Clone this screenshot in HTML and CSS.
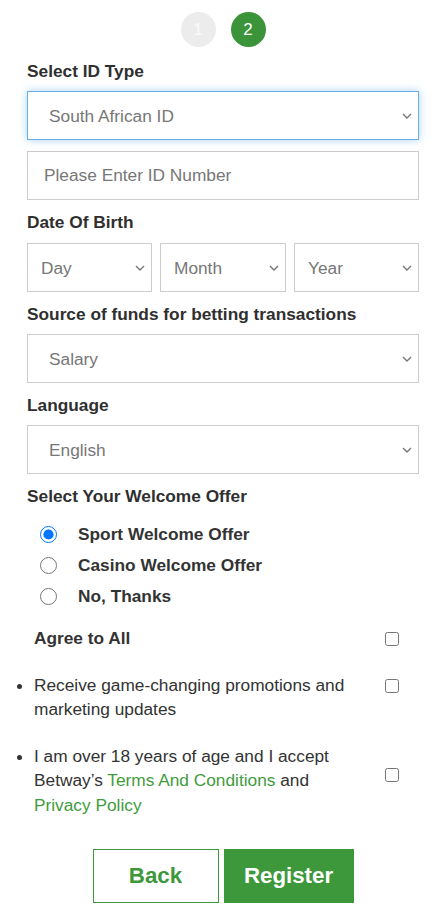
FILE: index.html
```html
<!DOCTYPE html>
<html lang="en">
<head>
<meta charset="utf-8">
<title>Register</title>
<link rel="stylesheet" href="styles.css">
</head>
<body>
<div class="page">
  <div class="steps">
    <span class="step step-done">1</span>
    <span class="step step-active">2</span>
  </div>

  <div class="label label-first">Select ID Type</div>
  <div class="select-wrap focused">
    <select class="field select-wide"><option>South African ID</option></select>
    <svg class="chev" width="10" height="6" viewBox="0 0 10 6"><path d="M1 1l4 4 4-4" fill="none" stroke="#777" stroke-width="1.4"/></svg>
  </div>
  <input class="field input" type="text" placeholder="Please Enter ID Number">

  <div class="label label-dob">Date Of Birth</div>
  <div class="dob">
    <div class="select-wrap">
      <select class="field select-small"><option>Day</option></select>
      <svg class="chev" width="10" height="6" viewBox="0 0 10 6"><path d="M1 1l4 4 4-4" fill="none" stroke="#777" stroke-width="1.4"/></svg>
    </div>
    <div class="select-wrap">
      <select class="field select-small"><option>Month</option></select>
      <svg class="chev" width="10" height="6" viewBox="0 0 10 6"><path d="M1 1l4 4 4-4" fill="none" stroke="#777" stroke-width="1.4"/></svg>
    </div>
    <div class="select-wrap">
      <select class="field select-small"><option>Year</option></select>
      <svg class="chev" width="10" height="6" viewBox="0 0 10 6"><path d="M1 1l4 4 4-4" fill="none" stroke="#777" stroke-width="1.4"/></svg>
    </div>
  </div>

  <div class="label">Source of funds for betting transactions</div>
  <div class="select-wrap">
    <select class="field select-wide"><option>Salary</option></select>
    <svg class="chev" width="10" height="6" viewBox="0 0 10 6"><path d="M1 1l4 4 4-4" fill="none" stroke="#777" stroke-width="1.4"/></svg>
  </div>

  <div class="label">Language</div>
  <div class="select-wrap">
    <select class="field select-wide"><option>English</option></select>
    <svg class="chev" width="10" height="6" viewBox="0 0 10 6"><path d="M1 1l4 4 4-4" fill="none" stroke="#777" stroke-width="1.4"/></svg>
  </div>

  <div class="label">Select Your Welcome Offer</div>
  <div class="radios">
    <label class="radio-row"><input type="radio" name="offer" checked><span>Sport Welcome Offer</span></label>
    <label class="radio-row"><input type="radio" name="offer"><span>Casino Welcome Offer</span></label>
    <label class="radio-row"><input type="radio" name="offer"><span>No, Thanks</span></label>
  </div>

  <div class="consents">
    <div class="consent">
      <div class="consent-text strong">Agree to All</div>
      <div class="consent-box"><input type="checkbox"></div>
    </div>
    <div class="consent bullet">
      <div class="consent-text">Receive game-changing promotions and marketing updates</div>
      <div class="consent-box"><input type="checkbox"></div>
    </div>
    <div class="consent bullet">
      <div class="consent-text">I am over 18 years of age and I accept Betway’s <a href="#">Terms And Conditions</a> and <a href="#">Privacy Policy</a></div>
      <div class="consent-box consent-box-low"><input type="checkbox"></div>
    </div>
  </div>

  <div class="buttons">
    <button class="btn btn-back">Back</button>
    <button class="btn btn-register">Register</button>
  </div>
</div>
</body>
</html>
```

FILE: styles.css
```css
html, body {
  margin: 0;
  padding: 0;
  background: #fff;
}

body {
  font-family: "Liberation Sans", Arial, sans-serif;
  font-size: 17.3px;
  color: #333;
}

.page {
  width: 392px;
  padding: 12px 28px 0 27px;
}

.steps {
  display: flex;
  justify-content: center;
  gap: 15px;
  height: 35px;
}

.step {
  width: 35px;
  height: 35px;
  border-radius: 50%;
  display: flex;
  align-items: center;
  justify-content: center;
  color: #fff;
  font-size: 17px;
}

.step-done {
  background: #ececec;
  color: #fafafa;
}

.step-active {
  background: #3b9439;
}

.label {
  font-weight: bold;
  line-height: 20px;
  margin: 12px 0 10px;
  color: #2f2f2f;
}

.label-first {
  margin-top: 14px;
}

.label-dob {
  margin-bottom: 11px;
}

.select-wrap {
  position: relative;
}

.field {
  display: block;
  box-sizing: border-box;
  width: 100%;
  height: 49px;
  border: 1px solid #ccc;
  border-radius: 0;
  background: #fff;
  font-family: "Liberation Sans", Arial, sans-serif;
  font-size: 17.3px;
  color: #777;
  outline: none;
  margin: 0;
}

select.field {
  -webkit-appearance: none;
  appearance: none;
}

.select-wide {
  padding: 0 30px 0 21px;
}

.select-small {
  padding: 0 24px 0 13px;
}

.focused .field {
  border-color: #66afe9;
  box-shadow: 0 0 8px rgba(102, 175, 233, 0.55);
}

.chev {
  position: absolute;
  right: 7px;
  top: 22px;
  pointer-events: none;
}

.input {
  margin-top: 11px;
  padding: 0 16px;
}

.input::placeholder {
  color: #777;
}

.dob {
  display: grid;
  grid-template-columns: 125px 126px 125px;
  gap: 8px;
}

.radios {
  margin-top: 13px;
  padding-left: 13px;
}

.radio-row {
  display: flex;
  align-items: center;
  height: 31px;
  font-weight: bold;
}

.radio-row input {
  width: 17px;
  height: 17px;
  margin: 0 21px 0 0;
}

.consents {
  margin-top: 14px;
}

.consent {
  display: flex;
  align-items: flex-start;
  line-height: 24.5px;
  margin-bottom: 22px;
  padding-left: 7px;
  position: relative;
}

.consent.bullet::before {
  content: "";
  position: absolute;
  left: -10px;
  top: 11px;
  width: 5px;
  height: 5px;
  border-radius: 50%;
  background: #333;
}

.consent-text {
  width: 330px;
}

.strong {
  font-weight: bold;
}

.consent-text a {
  color: #3f9c3d;
  text-decoration: none;
}

.consent-box {
  flex: 1;
  display: flex;
  justify-content: center;
  padding-top: 6px;
}

.consent-box-low {
  padding-top: 24px;
}

.consent-box input {
  width: 14px;
  height: 14px;
  margin: 0;
}

.buttons {
  display: flex;
  justify-content: center;
  gap: 5px;
  margin-top: 32px;
}

.btn {
  height: 54px;
  font-family: "Liberation Sans", Arial, sans-serif;
  font-size: 22.3px;
  font-weight: bold;
  border-radius: 0;
  cursor: pointer;
}

.btn-back {
  width: 126px;
  background: #fff;
  color: #3d983b;
  border: 1px solid #3d983b;
}

.btn-register {
  width: 130px;
  background: #3d983b;
  color: #fff;
  border: 1px solid #3d983b;
}
```
